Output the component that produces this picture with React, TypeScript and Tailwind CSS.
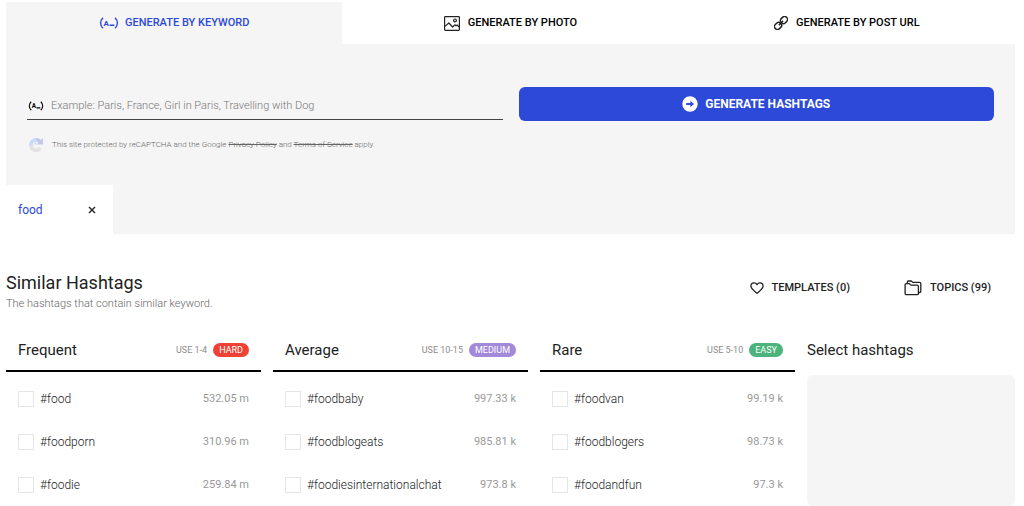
import { FC, ReactNode, useState } from 'react';

type Hashtag = { name: string; count: string };

type HashtagGroup = {
    title: string;
    usage: string;
    level: string;
    levelClass: string;
    tags: Hashtag[];
};

const groups: HashtagGroup[] = [
    {
        title: 'Frequent',
        usage: 'USE 1-4',
        level: 'HARD',
        levelClass: 'bg-[#ef4136]',
        tags: [
            { name: '#food', count: '532.05 m' },
            { name: '#foodporn', count: '310.96 m' },
            { name: '#foodie', count: '259.84 m' },
        ],
    },
    {
        title: 'Average',
        usage: 'USE 10-15',
        level: 'MEDIUM',
        levelClass: 'bg-[#a389d9]',
        tags: [
            { name: '#foodbaby', count: '997.33 k' },
            { name: '#foodblogeats', count: '985.81 k' },
            { name: '#foodiesinternationalchat', count: '973.8 k' },
        ],
    },
    {
        title: 'Rare',
        usage: 'USE 5-10',
        level: 'EASY',
        levelClass: 'bg-[#4bb37b]',
        tags: [
            { name: '#foodvan', count: '99.19 k' },
            { name: '#foodblogers', count: '98.73 k' },
            { name: '#foodandfun', count: '97.3 k' },
        ],
    },
];

const KeywordIcon: FC<{ className: string }> = ({ className }) => (
    <svg viewBox="0 0 20 12" className={className} aria-hidden="true">
        <path
            d="M4 .7C.8 3.8.8 8.2 4 11.3M16 .7c3.2 3.1 3.2 7.5 0 10.6M10.6 8.3h4.8"
            fill="none"
            stroke="currentColor"
            strokeWidth="1.4"
        />
        <text x="4.6" y="9" fontSize="8" fontWeight="700" fill="currentColor">
            A
        </text>
    </svg>
);

const PhotoIcon = () => (
    <svg
        viewBox="0 0 16 15"
        className="h-[15px] w-4"
        fill="none"
        stroke="#222"
        strokeWidth="1.2"
        strokeLinejoin="round"
        aria-hidden="true">
        <rect x=".6" y=".6" width="14.8" height="13.8" rx=".8" />
        <path d="M1 10.4l3.8-3.4 3.8 4 2.2-2.2 1.2 1 1.2-.8 2 2" />
        <circle cx="11" cy="4.4" r="1.4" />
    </svg>
);

const LinkIcon = () => (
    <svg
        viewBox="0 0 16 16"
        className="size-[14px]"
        fill="none"
        stroke="#222"
        strokeWidth="1.7"
        aria-hidden="true">
        <g transform="rotate(-45 8 8)">
            <rect x="-1" y="4.7" width="8.4" height="6.6" rx="2.8" />
            <rect x="8.6" y="4.7" width="8.4" height="6.6" rx="2.8" />
            <path d="M4.6 8h6.8" strokeWidth="1.7" />
        </g>
    </svg>
);

const ArrowIcon = () => (
    <svg viewBox="0 0 16 16" className="size-4" aria-hidden="true">
        <circle cx="8" cy="8" r="7.7" fill="#fff" />
        <path d="M4.2 7h4.2V4.8L12 8l-3.6 3.2V9H4.2z" fill="#2c49d8" />
    </svg>
);

const RecaptchaIcon = () => (
    <svg
        viewBox="0 0 16 16"
        className="size-4"
        fill="none"
        strokeWidth="3.6"
        aria-hidden="true">
        <path d="M2.8 8A5.2 5.2 0 0 1 8 2.8" stroke="#c9dbf6" />
        <path d="M8 2.8a5.2 5.2 0 0 1 4.8 3.4" stroke="#bfcaea" />
        <path d="M15 1v6.6H8.4z" fill="#bfcaea" />
        <path d="M2.8 8a5.2 5.2 0 0 0 9.6 2.8" stroke="#e2e2e2" />
        <path d="M1 8.2h5.4L3.4 11z" fill="#e2e2e2" />
        <path d="M6.4 3.6v4.6l2-1.4z" fill="#c9dbf6" />
    </svg>
);

const HeartIcon = () => (
    <svg
        viewBox="0 0 16 14"
        className="h-3 w-[14px]"
        fill="none"
        stroke="#222"
        strokeWidth="1.5"
        strokeLinejoin="round"
        aria-hidden="true">
        <path d="M8 13.2C5.6 11 .9 8.4.9 4.8.9 2.4 2.6.9 4.6.9 6.1.9 7.3 1.8 8 3 8.7 1.8 9.9.9 11.4.9c2 0 3.7 1.5 3.7 3.9 0 3.6-4.7 6.2-7.1 8.4z" />
    </svg>
);

const FoldersIcon = () => (
    <svg
        viewBox="0 0 18 16"
        className="h-4 w-[18px]"
        fill="none"
        stroke="#222"
        strokeWidth="1.3"
        strokeLinejoin="round"
        aria-hidden="true">
        <path d="M1.1 4.9c0-.8.5-1.3 1.3-1.3h2.8c.8 0 1 1.5 1.9 1.5h6c.8 0 1.3.5 1.3 1.3v7c0 .8-.5 1.3-1.3 1.3H2.4c-.8 0-1.3-.5-1.3-1.3z" />
        <path d="M3.3 3.4V2.2C3.3 1.4 3.7 1 4.4 1h2.7c.8 0 1 1.3 1.9 1.3h6.4c.9 0 1.4.5 1.4 1.3v7.6c0 .9-.6 1.4-2.2 1.4" />
    </svg>
);

const ModeTab: FC<{ icon: ReactNode; label: string; active?: boolean }> = ({
    icon,
    label,
    active,
}) => (
    <button
        type="button"
        role="tab"
        aria-selected={Boolean(active)}
        className={
            active
                ? 'flex items-center justify-center gap-1.5 bg-[#f5f5f5] text-[#2c49d8]'
                : 'flex items-center justify-center gap-2 bg-white text-black'
        }>
        {icon}
        <span>{label}</span>
    </button>
);

const GroupColumn: FC<{ group: HashtagGroup }> = ({ group }) => (
    <section className="min-w-0 flex-1">
        <header className="flex h-11 items-center border-b-2 border-black px-3 pt-0.5">
            <h3 className="flex-1 text-[15px] text-[#222]">{group.title}</h3>
            <span className="mr-1.5 text-[9px] leading-[14px] text-[#8c8c8c]">
                {group.usage}
            </span>
            <span
                className={`h-[14px] rounded-full px-1.5 text-[9px] leading-[14px] text-white ${group.levelClass}`}>
                {group.level}
            </span>
        </header>
        <ul className="pt-[5px]">
            {group.tags.map((tag) => (
                <li key={tag.name}>
                    <label className="flex h-[43px] items-center px-3">
                        <input
                            type="checkbox"
                            className="mr-1.5 size-4 appearance-none border border-[#e6e6e6] bg-white checked:bg-[#2c49d8]"
                        />
                        <span className="flex-1 text-xs font-light text-[#222]">
                            {tag.name}
                        </span>
                        <span className="text-[11px] leading-4 text-[#999]">
                            {tag.count}
                        </span>
                    </label>
                </li>
            ))}
        </ul>
    </section>
);

export default function App() {
    const [keyword, setKeyword] = useState('');

    return (
        <main className="bg-white pt-0.5 pr-[9px] pl-1.5 font-[Roboto,sans-serif]">
            <div
                role="tablist"
                className="grid h-[42px] grid-cols-3 text-[11px] font-medium">
                <ModeTab
                    active
                    icon={<KeywordIcon className="h-3 w-5" />}
                    label="GENERATE BY KEYWORD"
                />
                <ModeTab icon={<PhotoIcon />} label="GENERATE BY PHOTO" />
                <ModeTab icon={<LinkIcon />} label="GENERATE BY POST URL" />
            </div>

            <div className="bg-[#f5f5f5]">
                <form
                    className="grid h-[141px] grid-cols-2 gap-x-4 px-[21px] pt-[43px]"
                    onSubmit={(e) => e.preventDefault()}>
                    <div>
                        <label className="flex h-[33px] items-center gap-[7px] border-b border-[#444] pt-1.5">
                            <KeywordIcon className="ml-px h-[10px] w-4" />
                            <input
                                type="text"
                                aria-label="Keyword"
                                value={keyword}
                                onChange={(e) => setKeyword(e.target.value)}
                                placeholder="Example: Paris, France, Girl in Paris, Travelling with Dog"
                                className="flex-1 bg-transparent text-[11px] font-light outline-none placeholder:text-[#777]"
                            />
                        </label>
                        <div className="mt-[17px] flex items-center gap-2 pl-px text-[8px] leading-4 font-light text-[#666]">
                            <RecaptchaIcon />
                            <p>
                                This site protected by reCAPTCHA and the Google{' '}
                                <a href="#privacy" className="line-through">
                                    Privacy Policy
                                </a>{' '}
                                and{' '}
                                <a href="#terms" className="line-through">
                                    Terms of Service
                                </a>{' '}
                                apply.
                            </p>
                        </div>
                    </div>
                    <button
                        type="submit"
                        className="flex h-[34px] items-center justify-center gap-[7px] rounded-md bg-[#2c49d8] text-xs font-bold text-white">
                        <ArrowIcon />
                        GENERATE HASHTAGS
                    </button>
                </form>

                <div className="flex h-[49px] w-[107px] items-center justify-between bg-white pr-[17px] pl-3">
                    <span className="text-xs text-[#2c49d8]">food</span>
                    <button type="button" aria-label="Remove food">
                        <svg
                            viewBox="0 0 8 8"
                            className="size-2"
                            stroke="#222"
                            strokeWidth="1.4"
                            aria-hidden="true">
                            <path d="M1 1l6 6M7 1L1 7" />
                        </svg>
                    </button>
                </div>
            </div>

            <div className="mt-9 flex items-center">
                <div className="flex-1">
                    <h2 className="text-lg leading-[25px] text-[#222]">
                        Similar Hashtags
                    </h2>
                    <p className="text-[11px] leading-[17px] font-light text-[#666]">
                        The hashtags that contain similar keyword.
                    </p>
                </div>
                <div className="flex items-center gap-[54px] pr-6 pb-1.5 text-[11px] font-medium text-[#222]">
                    <button type="button" className="flex items-center gap-2">
                        <HeartIcon />
                        TEMPLATES (0)
                    </button>
                    <button type="button" className="flex items-center gap-2">
                        <FoldersIcon />
                        TOPICS (99)
                    </button>
                </div>
            </div>

            <div className="mt-4 flex gap-3">
                {groups.map((group) => (
                    <GroupColumn key={group.title} group={group} />
                ))}
                <aside className="flex w-[208px] flex-col">
                    <h3 className="flex h-[47px] items-center pb-[3px] text-[15px] text-[#222]">
                        Select hashtags
                    </h3>
                    <div className="flex-1 rounded-md bg-[#f5f5f5]" />
                </aside>
            </div>
        </main>
    );
}
